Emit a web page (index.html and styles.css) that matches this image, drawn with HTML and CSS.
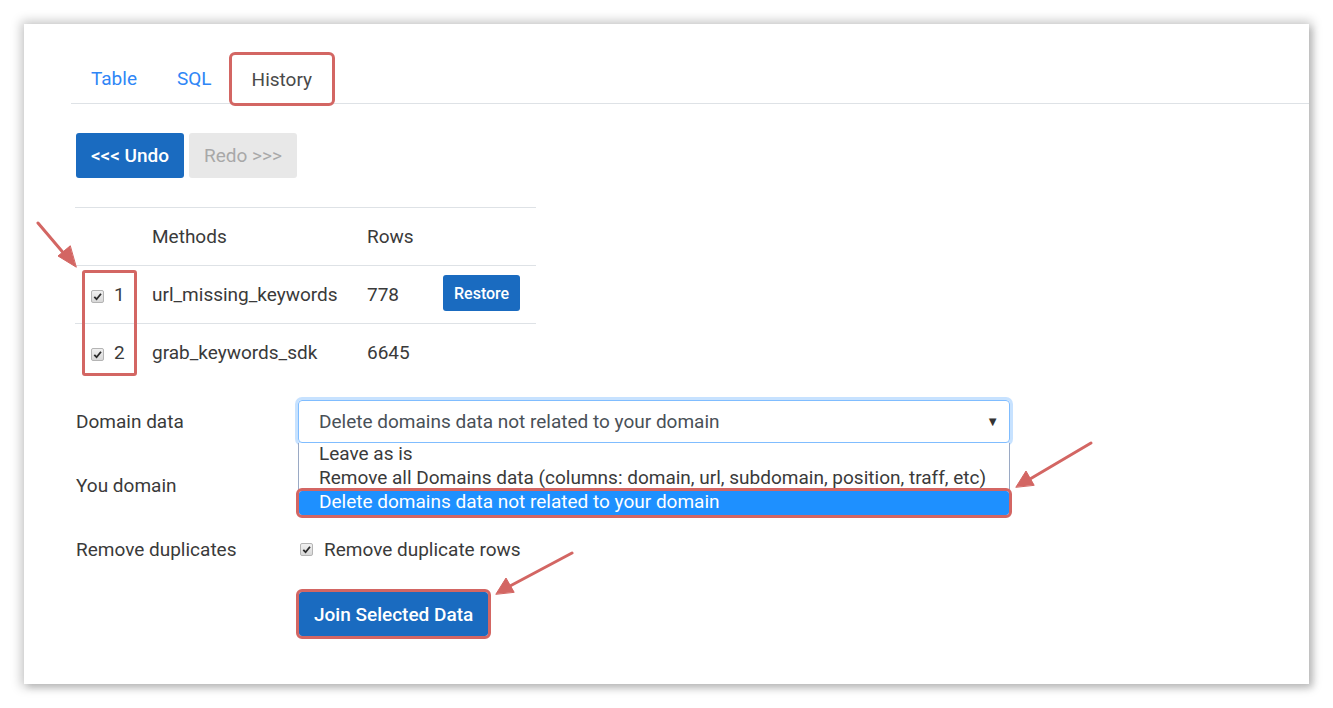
FILE: index.html
```html
<!DOCTYPE html>
<html lang="en">
<head>
    <meta charset="UTF-8">
    <meta name="viewport" content="width=device-width, initial-scale=1.0">
    <title>History</title>
<link rel="stylesheet" href="styles.css">
</head>
<body>
    <section class="card">
        <nav class="tabs">
            <a class="tab">Table</a>
            <a class="tab">SQL</a>
            <a class="tab active mark">History</a>
        </nav>

        <div class="history-btns">
            <button class="btn btn-blue btn-undo">&lt;&lt;&lt; Undo</button>
            <button class="btn btn-off">Redo &gt;&gt;&gt;</button>
        </div>

        <div class="table-wrap">
            <table class="history">
                <tr>
                    <th class="c-check"></th>
                    <th class="c-method">Methods</th>
                    <th class="c-rows">Rows</th>
                    <th class="c-act"></th>
                </tr>
                <tr>
                    <td class="c-check"><span class="check"><svg viewBox="0 0 12 12"><path d="M2.5 6.5 L5 9 L9.8 3"/></svg></span>1</td>
                    <td>url_missing_keywords</td>
                    <td>778</td>
                    <td><button class="btn btn-blue btn-sm">Restore</button></td>
                </tr>
                <tr class="last">
                    <td class="c-check"><span class="check"><svg viewBox="0 0 12 12"><path d="M2.5 6.5 L5 9 L9.8 3"/></svg></span>2</td>
                    <td>grab_keywords_sdk</td>
                    <td>6645</td>
                    <td></td>
                </tr>
            </table>
            <div class="check-mark"></div>
        </div>

        <div class="form">
            <div class="form-row first">
                <label class="form-label">Domain data</label>
                <div class="select-box">
                    <div class="select">
                        <span>Delete domains data not related to your domain</span>
                        <span class="caret">&#9660;</span>
                    </div>
                    <ul class="options">
                        <li>Leave as is</li>
                        <li>Remove all Domains data (columns: domain, url, subdomain, position, traff, etc)</li>
                        <li class="picked mark">Delete domains data not related to your domain</li>
                    </ul>
                </div>
            </div>
            <div class="form-row">
                <label class="form-label">You domain</label>
                <div class="field"></div>
            </div>
            <div class="form-row">
                <label class="form-label">Remove duplicates</label>
                <div class="field dup">
                    <span class="check"><svg viewBox="0 0 12 12"><path d="M2.5 6.5 L5 9 L9.8 3"/></svg></span>
                    Remove duplicate rows
                </div>
            </div>
            <div class="form-row submit-row">
                <span class="form-label"></span>
                <button class="btn btn-blue btn-join mark">Join Selected Data</button>
            </div>
        </div>
    </section>

    <svg class="arrows" width="1333" height="708" viewBox="0 0 1333 708">
        <g stroke="#d36663" stroke-width="3" fill="#d36663" stroke-linecap="round">
            <line x1="38" y1="223" x2="66" y2="256"/>
            <polygon points="76,267 58,256 70,246" stroke-width="1"/>
            <line x1="1091" y1="443" x2="1030" y2="479"/>
            <polygon points="1016,487 1026,471 1034,485" stroke-width="1"/>
            <line x1="572" y1="553" x2="510" y2="586"/>
            <polygon points="496,594 506,578 514,592" stroke-width="1"/>
        </g>
    </svg>
</body>
</html>
```

FILE: styles.css
```css
    body {
        margin: 0;
        padding: 24px 24px;
        background: #fff;
        font-family: Roboto, "Liberation Sans", sans-serif;
        font-size: 19px;
        color: #3a3a3a;
        }
    .card {
        width: 1285px;
        height: 660px;
        box-sizing: border-box;
        padding-top: 29px;
        padding-left: 47px;
        background: #fff;
        box-shadow: 0 0 10px 3px rgba(0,0,0,0.22), 4px 4px 6px rgba(0,0,0,0.12);
        }
    .tabs {
        display: flex;
        height: 50px;
        border-bottom: 1px solid #dee2e6;
        }
    .tab {
        display: flex;
        align-items: center;
        padding: 0 20px;
        color: #2f86f6;
        }
    .tab.active {
        color: #4a4a4a;
        }
    .mark {
        outline: 3px solid #d36663;
        outline-offset: 0;
        border-radius: 3px;
        }
    .tab.mark {
        margin-top: 2px;
        }
    .history-btns {
        display: flex;
        gap: 5px;
        margin-top: 29px;
        margin-left: 5px;
        }
    .btn {
        font-family: Roboto, "Liberation Sans", sans-serif;
        font-size: 19px;
        border: none;
        border-radius: 3px;
        height: 45px;
        padding: 0 14px;
        }
    .btn-blue {
        background: #1a6bc0;
        color: #fff;
        }
    .btn-undo {
        width: 108px;
        font-weight: 500;
        }
    .btn-off {
        width: 108px;
        background: #e8e8e8;
        color: #a8a8a8;
        }
    .btn-sm {
        height: 36px;
        padding: 0 11px;
        font-size: 16px;
        font-weight: 500;
        }
    .table-wrap {
        position: relative;
        width: 461px;
        margin-top: 29px;
        margin-left: 4px;
        }
    .history {
        border-collapse: collapse;
        width: 461px;
        }
    .history th, .history td {
        height: 57px;
        padding: 0 0 0 15px;
        border-top: 1px solid #dee2e6;
        text-align: left;
        font-weight: normal;
        vertical-align: middle;
        white-space: nowrap;
        }
    .history td .btn-sm {
        margin-top: -3px;
        }
    .history .c-check {
        width: 46px;
        padding-left: 16px;
        }
    .history .c-method { width: 200px; }
    .history .c-rows { width: 61px; }
    .check {
        display: inline-flex;
        align-items: center;
        justify-content: center;
        width: 11px;
        height: 11px;
        border: 1px solid #b4b4b4;
        border-radius: 2px;
        background: linear-gradient(#f0f0f0, #d8d8d8);
        margin-right: 10px;
        vertical-align: -1px;
        }
    .check svg {
        width: 11px;
        height: 11px;
        fill: none;
        stroke: #2b2b2b;
        stroke-width: 2;
        }
    .check-mark {
        position: absolute;
        left: 7px;
        top: 63px;
        width: 49px;
        height: 100px;
        border: 3px solid #d36663;
        border-radius: 3px;
        }
    .form {
        margin-top: 19px;
        margin-left: 5px;
        }
    .form-row {
        display: flex;
        align-items: center;
        height: 64px;
        }
    .form-row.first {
        height: 43px;
        margin-bottom: 10px;
        }
    .form-label {
        width: 222px;
        flex: none;
        }
    .select-box {
        position: relative;
        width: 712px;
        }
    .select {
        display: flex;
        justify-content: space-between;
        align-items: center;
        height: 43px;
        box-sizing: border-box;
        padding: 0 10px 0 20px;
        border: 1px solid #80bdff;
        border-radius: 4px;
        box-shadow: 0 0 0 3px rgba(0,123,255,0.22);
        color: #495057;
        }
    .caret {
        font-size: 13px;
        color: #333;
        }
    .options {
        position: absolute;
        left: 0;
        top: 43px;
        width: 712px;
        box-sizing: border-box;
        margin: 0;
        padding: 0;
        list-style: none;
        background: #fff;
        border: 1px solid #9aa9c4;
        border-top: none;
        z-index: 2;
        }
    .options li {
        height: 24px;
        line-height: 22px;
        padding-left: 20px;
        color: #3a3a3a;
        }
    .options .picked {
        background: #1e90ff;
        color: #fff;
        }
    .field {
        display: flex;
        align-items: center;
        }
    .dup .check {
        margin-left: 2px;
        margin-right: 11px;
        }
    .submit-row {
        height: auto;
        margin-top: 11px;
        }
    .btn-join {
        height: 44px;
        padding: 0 15px;
        margin-left: 1px;
        font-weight: 500;
        }
    .arrows {
        position: absolute;
        left: 0;
        top: 0;
        pointer-events: none;
        z-index: 5;
        }
```
